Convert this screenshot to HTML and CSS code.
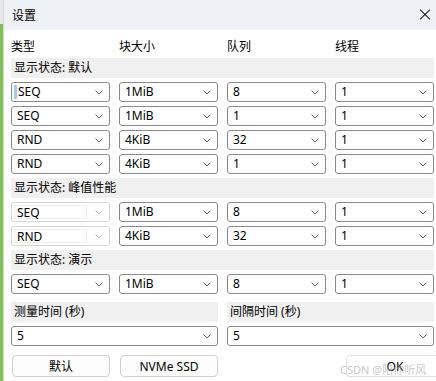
FILE: index.html
```html
<!DOCTYPE html>
<html lang="zh-CN">

<head>
    <meta charset="UTF-8">
    <meta name="viewport" content="width=device-width, initial-scale=1.0">
    <title>设置</title>
    <link rel="stylesheet" href="styles.css">
</head>

<body>
    <div class="edge"></div>
    <div class="window">
        <!-- Title bar -->
        <div class="titlebar">
            <span class="title">设置</span>
            <span class="close"></span>
        </div>

        <div class="content">
            <div class="heads">
                <span>类型</span><span>块大小</span><span>队列</span><span>线程</span>
            </div>

            <div class="grid">
                <div class="section">显示状态: 默认</div>

                <div class="combo"><span class="caret"></span><span class="val">SEQ</span><i class="arrow"></i></div>
                <div class="combo"><span class="val">1MiB</span><i class="arrow"></i></div>
                <div class="combo"><span class="val">8</span><i class="arrow"></i></div>
                <div class="combo"><span class="val">1</span><i class="arrow"></i></div>

                <div class="combo"><span class="val">SEQ</span><i class="arrow"></i></div>
                <div class="combo"><span class="val">1MiB</span><i class="arrow"></i></div>
                <div class="combo"><span class="val">1</span><i class="arrow"></i></div>
                <div class="combo"><span class="val">1</span><i class="arrow"></i></div>

                <div class="combo"><span class="val">RND</span><i class="arrow"></i></div>
                <div class="combo"><span class="val">4KiB</span><i class="arrow"></i></div>
                <div class="combo"><span class="val">32</span><i class="arrow"></i></div>
                <div class="combo"><span class="val">1</span><i class="arrow"></i></div>

                <div class="combo"><span class="val">RND</span><i class="arrow"></i></div>
                <div class="combo"><span class="val">4KiB</span><i class="arrow"></i></div>
                <div class="combo"><span class="val">1</span><i class="arrow"></i></div>
                <div class="combo"><span class="val">1</span><i class="arrow"></i></div>

                <div class="section">显示状态: 峰值性能</div>

                <div class="combo disabled"><span class="field">SEQ</span><i class="arrow"></i></div>
                <div class="combo"><span class="val">1MiB</span><i class="arrow"></i></div>
                <div class="combo"><span class="val">8</span><i class="arrow"></i></div>
                <div class="combo"><span class="val">1</span><i class="arrow"></i></div>

                <div class="combo disabled"><span class="field">RND</span><i class="arrow"></i></div>
                <div class="combo"><span class="val">4KiB</span><i class="arrow"></i></div>
                <div class="combo"><span class="val">32</span><i class="arrow"></i></div>
                <div class="combo"><span class="val">1</span><i class="arrow"></i></div>

                <div class="section">显示状态: 演示</div>

                <div class="combo"><span class="val">SEQ</span><i class="arrow"></i></div>
                <div class="combo"><span class="val">1MiB</span><i class="arrow"></i></div>
                <div class="combo"><span class="val">8</span><i class="arrow"></i></div>
                <div class="combo"><span class="val">1</span><i class="arrow"></i></div>
            </div>

            <div class="grid timing">
                <div class="section half">测量时间 (秒)</div>
                <div class="section half">间隔时间 (秒)</div>
                <div class="combo half"><span class="val">5</span><i class="arrow"></i></div>
                <div class="combo half"><span class="val">5</span><i class="arrow"></i></div>
            </div>

            <div class="buttons">
                <button class="btn">默认</button>
                <button class="btn">NVMe SSD</button>
                <span></span>
                <button class="btn ok">OK</button>
            </div>
        </div>
    </div>
    <div class="watermark">CSDN @陪你听风</div>
</body>

</html>
```

FILE: styles.css
```css
/* Reset */
* {
    margin: 0;
    padding: 0;
    box-sizing: border-box;
}

body {
    display: flex;
    width: 436px;
    height: 381px;
    overflow: hidden;
    background-color: #fff;
    font-family: "Noto Sans", "Noto Sans CJK SC", sans-serif;
    font-size: 12px;
    color: #000;
    position: relative;
}

/* Strip of the window behind */
.edge {
    width: 3px;
    flex: none;
    background: linear-gradient(#e8e8e8 0 24px, #7cc24c 24px);
}

.window {
    flex: 1;
    min-width: 0;
    display: flex;
    flex-direction: column;
    border-left: 1px solid #d8d8d8;
}

/* Title bar */
.titlebar {
    height: 30px;
    display: flex;
    align-items: center;
    justify-content: space-between;
    padding: 0 5px 0 8px;
    background-color: #eef1f6;
}

.title {
    font-size: 12px;
}

/* Close button: two crossed lines */
.close {
    position: relative;
    width: 12px;
    height: 12px;
    flex: none;
}

.close::before,
.close::after {
    content: "";
    position: absolute;
    left: -1px;
    top: 5px;
    width: 14px;
    height: 1px;
    background-color: #1a1a1a;
    transform: rotate(45deg);
}

.close::after {
    transform: rotate(-45deg);
}

.content {
    padding: 0 2px 0 7px;
}

/* Column headings */
.heads {
    display: grid;
    grid-template-columns: repeat(4, 99px);
    column-gap: 9px;
    height: 28px;
    padding-top: 9px;
    line-height: 16px;
}

.grid {
    display: grid;
    grid-template-columns: repeat(4, 99px);
    grid-auto-rows: 20px;
    gap: 4px 9px;
}

.section {
    grid-column: 1 / -1;
    background-color: #f0f0f0;
    padding-left: 3px;
    line-height: 20px;
}

.half {
    grid-column: span 2;
}

.timing {
    margin-top: 8px;
}

/* Combo box */
.combo {
    display: flex;
    align-items: center;
    border: 1px solid #8a8a8a;
    border-radius: 3px;
    padding: 0 6px 0 5px;
    position: relative;
}

.combo .val {
    flex: 1;
    line-height: 18px;
}

.caret {
    width: 3px;
    height: 14px;
    background-color: #9ccaf0;
    margin-left: -3px;
    margin-right: 1px;
}

.arrow {
    width: 8px;
    height: 5px;
    background: url("data:image/svg+xml,%3Csvg xmlns='http://www.w3.org/2000/svg' width='8' height='5'%3E%3Cpath d='M0.5 0.5 L4 4 L7.5 0.5' stroke='%23606060' fill='none'/%3E%3C/svg%3E") no-repeat;
}

.combo.disabled {
    border-color: #d6d6d6;
    padding: 2px 6px 2px 2px;
}

.combo.disabled .field {
    flex: 1;
    height: 14px;
    line-height: 14px;
    border: 1px solid #ececec;
    padding-left: 2px;
    margin-right: 8px;
}

.combo.disabled .arrow {
    opacity: 0.4;
}

/* Buttons */
.buttons {
    display: grid;
    grid-template-columns: 98px 98px 108px 98px;
    column-gap: 10px;
    margin-top: 9px;
    padding-left: 1px;
}

.btn {
    height: 22px;
    border: 1px solid #d0d0d0;
    border-radius: 4px;
    background-color: #fdfdfd;
    font-family: "Noto Sans", "Noto Sans CJK SC", sans-serif;
    font-size: 12px;
    color: #000;
}

.btn.ok {
    border-color: #e0e0e0;
    background-color: #fff;
}

/* Watermark over the OK button */
.watermark {
    position: absolute;
    left: 340px;
    top: 361px;
    font-family: "Noto Sans", "Noto Sans CJK SC", sans-serif;
    font-size: 11px;
    color: rgba(160, 160, 160, 0.6);
}
```
